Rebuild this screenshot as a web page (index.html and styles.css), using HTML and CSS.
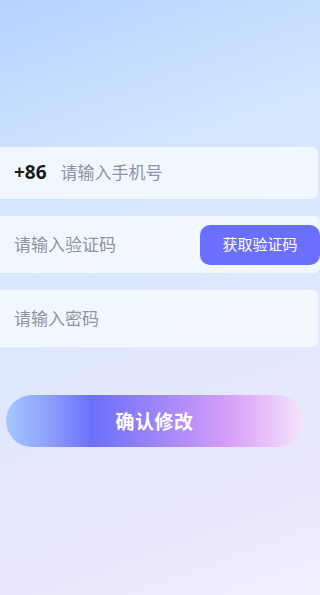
FILE: index.html
```html
<!DOCTYPE html>
<html lang="zh">
<head>
<meta charset="utf-8">
<link rel="stylesheet" href="styles.css">
</head>
<body>
<div class="page">
  <div class="form">
    <div class="row row-phone">
      <span class="prefix">+86</span>
      <span class="ph">请输入手机号</span>
    </div>
    <div class="row row-code">
      <span class="ph">请输入验证码</span>
      <span class="get-code">获取验证码</span>
    </div>
    <div class="row row-pwd">
      <span class="ph">请输入密码</span>
    </div>
  </div>
  <div class="submit">确认修改</div>
</div>
</body>
</html>
```
FILE: styles.css
```css
html, body {
  margin: 0;
  padding: 0;
}
body {
  font-family: "Noto Sans CJK SC", "Noto Sans", sans-serif;
}
.page {
  width: 320px;
  height: 595px;
  box-sizing: border-box;
  padding-top: 147px;
  background: linear-gradient(160deg, #b5d2ff 0%, #d3e7ff 30%, #e3e8fe 62%, #ebe8fe 85%, #f1effe 100%);
  overflow: hidden;
}
.form {
  display: flex;
  flex-direction: column;
  gap: 17px;
}
.row {
  display: flex;
  align-items: center;
  background: rgba(245, 249, 255, 0.88);
  border-radius: 0 6px 6px 0;
  margin-right: 2px;
  box-sizing: border-box;
  padding-left: 14px;
}
.row-phone {
  height: 52px;
}
.row-code {
  height: 57px;
  justify-content: space-between;
  padding-right: 0;
  margin-right: 0;
}
.row-pwd {
  height: 57px;
}
.prefix {
  font-family: "Noto Sans", "Noto Sans CJK SC", sans-serif;
  font-weight: 700;
  font-size: 19px;
  color: #1a1a1a;
  margin-right: 14px;
  padding-bottom: 3px;
}
.ph {
  font-size: 17px;
  color: #8e93a1;
  padding-bottom: 3px;
}
.get-code {
  width: 120px;
  height: 40px;
  border-radius: 10px;
  background: #6b6ffd;
  color: #ffffff;
  font-size: 15px;
  display: flex;
  align-items: center;
  justify-content: center;
  box-sizing: border-box;
  padding-bottom: 2px;
}
.submit {
  margin: 48px 0 0 6px;
  width: 297px;
  height: 52px;
  border-radius: 26px;
  background: linear-gradient(90deg, #a7c8ff 0%, #8a9bfb 16%, #6c70fa 29%, #9b84f8 50%, #d9a0f8 76%, #f6e3fc 100%);
  color: #ffffff;
  font-size: 19px;
  font-weight: 700;
  display: flex;
  align-items: center;
  justify-content: center;
  letter-spacing: 0.5px;
  box-sizing: border-box;
  padding-bottom: 2px;
}
```
